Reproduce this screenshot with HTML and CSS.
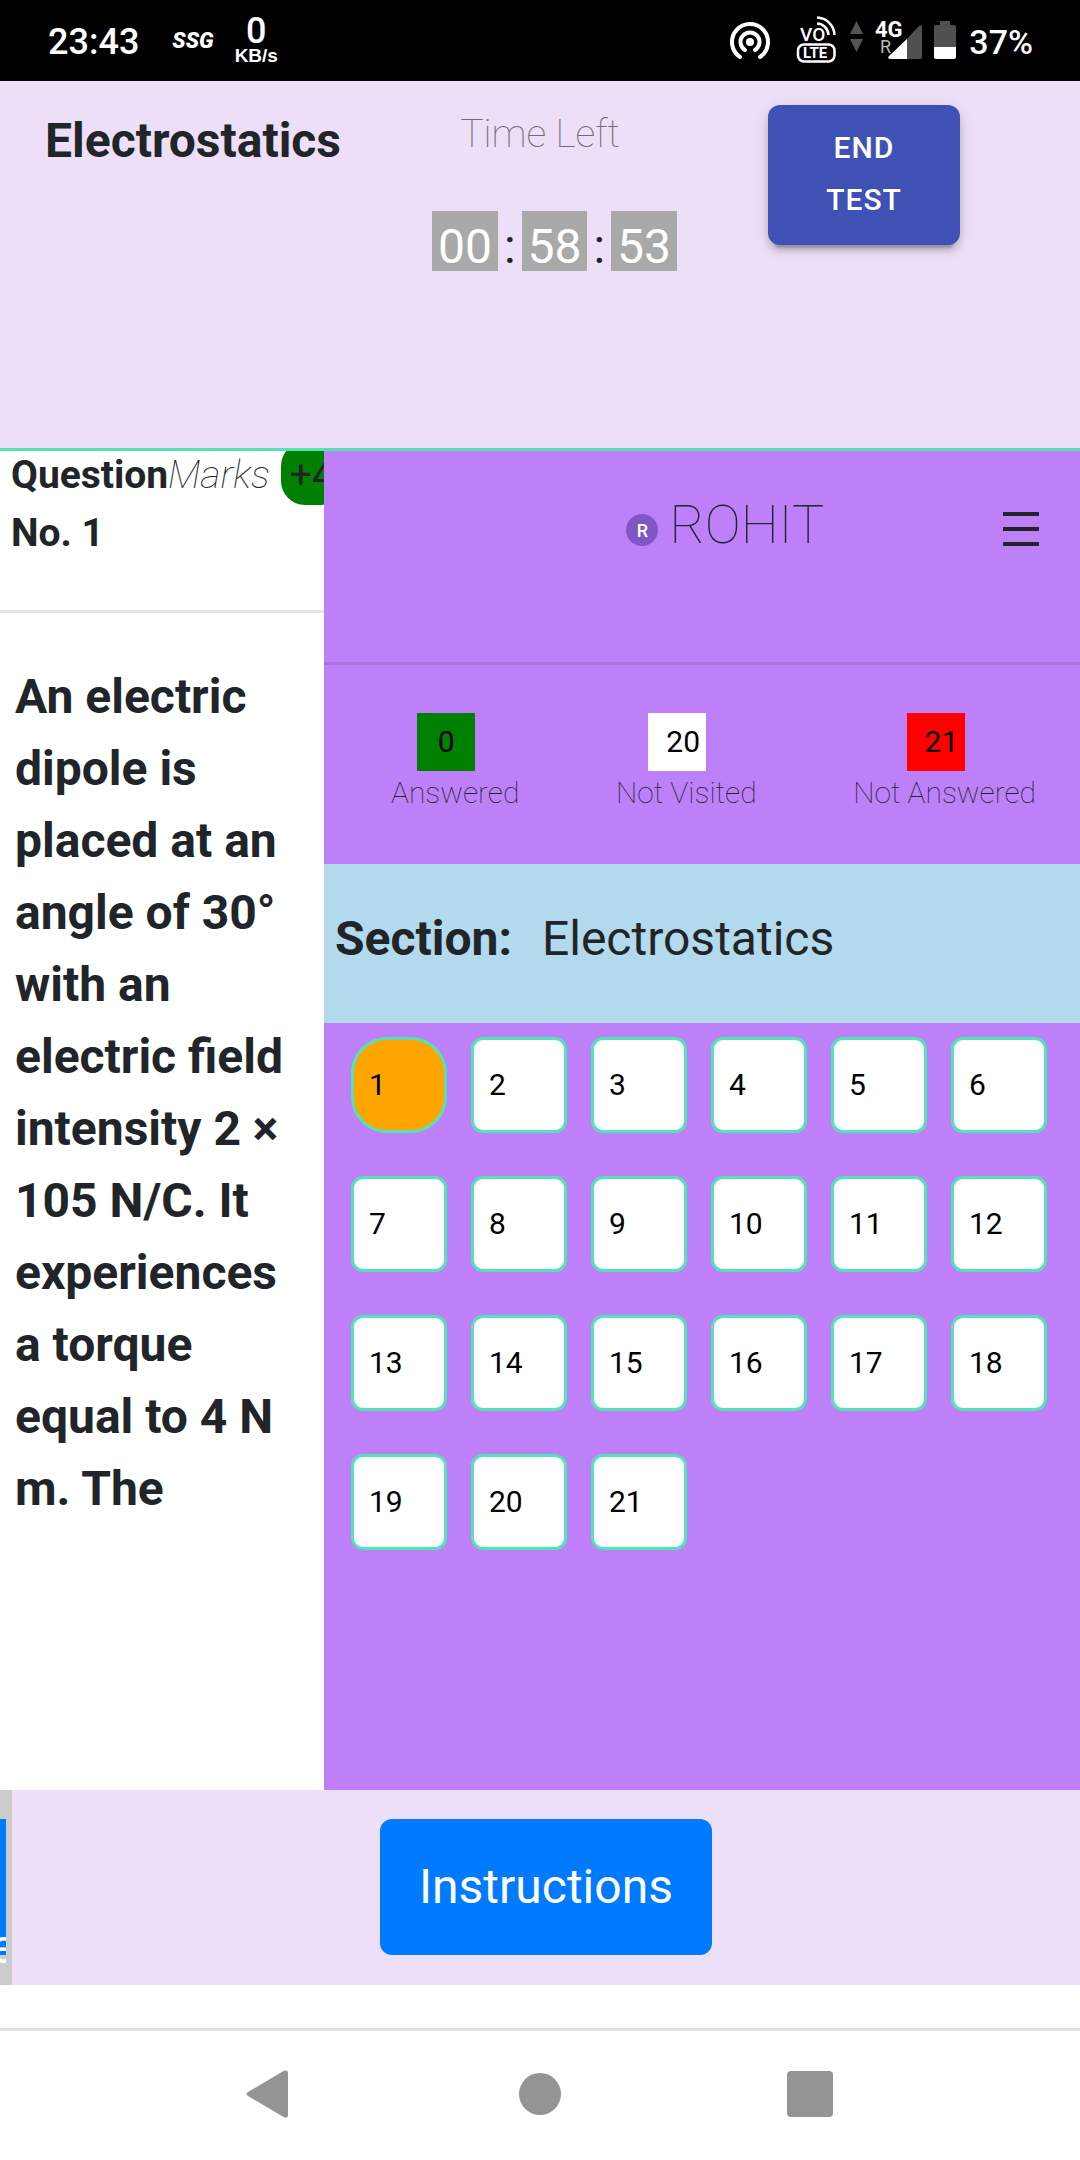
FILE: index.html
```html
<!DOCTYPE html>
<html lang="en">
<head>
<meta charset="utf-8">
<meta name="viewport" content="width=device-width, initial-scale=1">
<title>Electrostatics</title>
<link rel="stylesheet" href="styles.css">
</head>
<body>
<div class="status">
  <span class="clock">23:43</span>
  <span class="ssg">SSG</span>
  <span class="rate"><b class="rate-num">0</b><b class="rate-unit">KB/s</b></span>
  <svg class="status-icons" width="230" height="81" viewBox="728 0 230 81" aria-hidden="true">
    <g fill="none" stroke="#fff" stroke-width="4" stroke-linecap="round">
      <path d="M740 57a18 18 0 1 1 20 0"/>
      <path d="M745 50a9.500 9.500 0 1 1 10 0" />
    </g>
    <circle cx="750" cy="42" r="4" fill="#fff"/>
    <g fill="none" stroke="#fff" stroke-width="2.500">
      <rect x="798" y="44.500" width="36.500" height="17" rx="6"/>
      <path d="M817 17.500a18 18 0 0 1 17.500 17.500M817 23.500a12 12 0 0 1 11.500 11.500"/>
    </g>
    <text x="800" y="41" class="vo">VO</text>
    <text x="803" y="58" class="lte">LTE</text>
    <path d="M850 34h13l-6.500-13zM850 39h13l-6.500 13z" fill="#555"/>
    <path d="M888 59L919 26q3-2 3 1v30q0 2-2 2z" fill="#505050"/>
    <path d="M907 39v20h-17q-3-1-1-3z" fill="#fff"/>
    <text x="875" y="37" class="net">4G</text>
    <text x="880" y="53" class="roam">R</text>
    <path d="M940 21h10v4h4q2 0 2 2v21h-22v-21q0-2 2-2h4z" fill="#505050"/>
    <path d="M934 47h22v10q0 2-2 2h-18q-2 0-2-2z" fill="#fff"/>
  </svg>
  <span class="percent">37%</span>
</div>

<header class="top">
  <h1 class="title">Electrostatics</h1>
  <div class="time">
    <div class="time-label">Time Left</div>
    <div class="timer"><span class="digits">00</span><span>:</span><span class="digits">58</span><span>:</span><span class="digits">53</span></div>
  </div>
  <div class="end"><button class="end-btn" type="button">END TEST</button></div>
</header>

<main class="main">
  <section class="question">
    <div class="q-head">
      <b class="q-no">Question No. 1</b><i class="marks">Marks</i><span class="badge">+4</span>
    </div>
    <p class="q-text">An electric dipole is placed at an angle of 30° with an electric field intensity 2 × 105 N/C. It experiences a torque equal to 4 N m. The</p>
  </section>

  <aside class="panel">
    <div class="user">
      <span class="avatar">R</span>
      <span class="name">ROHIT</span>
      <button class="menu" type="button" aria-label="Menu">
        <svg width="36" height="34" viewBox="0 0 36 34"><path d="M0 2h36M0 17h36M0 32h36" stroke="#212529" stroke-width="4"/></svg>
      </button>
    </div>
    <div class="counts">
      <div class="count"><span class="box green">0</span><span class="count-label">Answered</span></div>
      <div class="count"><span class="box white">20</span><span class="count-label">Not Visited</span></div>
      <div class="count"><span class="box red">21</span><span class="count-label">Not Answered</span></div>
    </div>
    <div class="section"><b>Section:</b><span>Electrostatics</span></div>
    <div class="numbers">
      <button class="num current" type="button">1</button>
      <button class="num" type="button">2</button>
      <button class="num" type="button">3</button>
      <button class="num" type="button">4</button>
      <button class="num" type="button">5</button>
      <button class="num" type="button">6</button>
      <button class="num" type="button">7</button>
      <button class="num" type="button">8</button>
      <button class="num" type="button">9</button>
      <button class="num" type="button">10</button>
      <button class="num" type="button">11</button>
      <button class="num" type="button">12</button>
      <button class="num" type="button">13</button>
      <button class="num" type="button">14</button>
      <button class="num" type="button">15</button>
      <button class="num" type="button">16</button>
      <button class="num" type="button">17</button>
      <button class="num" type="button">18</button>
      <button class="num" type="button">19</button>
      <button class="num" type="button">20</button>
      <button class="num" type="button">21</button>
    </div>
  </aside>
</main>

<footer class="bottom">
  <div class="strip"><button class="cut" type="button">e</button></div>
  <div class="actions"><button class="instructions" type="button">Instructions</button></div>
</footer>

<nav class="nav">
  <button class="nav-btn" type="button" aria-label="Back"><svg width="48" height="48" viewBox="0 0 48 48"><path d="M2 22L38 .800q4-1.500 4 2.500v41.400q0 4-4 2.500L2 26q-3-2 0-4z" fill="#949494"/></svg></button>
  <button class="nav-btn" type="button" aria-label="Home"><svg width="48" height="48" viewBox="0 0 48 48"><circle cx="24" cy="24" r="21" fill="#949494"/></svg></button>
  <button class="nav-btn" type="button" aria-label="Recent apps"><svg width="48" height="48" viewBox="0 0 48 48"><rect x="1" y="1" width="46" height="46" rx="4" fill="#949494"/></svg></button>
</nav>
</body>
</html>
```
FILE: styles.css
```css
* { box-sizing: border-box; }

body {
  margin: 0;
  min-height: 100vh;
  display: flex;
  flex-direction: column;
  background: #fff;
  color: #212529;
  font-family: Roboto, "Liberation Sans", sans-serif;
}

button {
  border: 0;
  padding: 0;
  background: none;
  color: inherit;
  font: inherit;
}

svg { display: block; }

/* Status bar */
.status {
  display: flex;
  align-items: center;
  height: 81px;
  padding: 0 47px 0 48px;
  background: #000;
  color: #fff;
}
.clock { padding-top: 3px; font-size: 36px; font-weight: 500; }
.ssg { margin-left: 33px; font-size: 22px; font-weight: 900; font-style: italic; }
.rate {
  display: flex;
  flex-direction: column;
  align-items: center;
  margin-left: 21px;
  padding-bottom: 3px;
}
.rate-num { font-size: 36px; line-height: 34px; font-weight: 500; }
.rate-unit { font: bold 19px/16px "Liberation Sans", sans-serif; }
.status-icons { margin-left: auto; }
.percent { margin-left: 11px; padding-top: 2px; font-size: 34px; font-weight: 500; }
.status-icons text { fill: #fff; font-family: Roboto, sans-serif; }
.status-icons .vo { font-size: 19px; font-weight: 500; }
.status-icons .lte { font-size: 15px; font-weight: 700; }
.status-icons .net { font-size: 22px; font-weight: 700; }
.status-icons .roam { font-size: 18px; fill: #bbb; }

/* Test header */
.top {
  display: grid;
  grid-template-columns: 1fr 1fr 1fr;
  min-height: 370px;
  padding-top: 24px;
  background: #ecdff7;
  border-bottom: 3px solid #55e3b6;
}
.title { margin: 0; padding-left: 45px; font-size: 48px; line-height: 72px; }
.time {
  display: flex;
  flex-direction: column;
  align-items: center;
}
.time-label {
  color: #6c6c70;
  font-size: 39px;
  line-height: 58px;
  font-weight: 100;
}
.timer {
  display: flex;
  gap: 6px;
  margin-top: 48px;
  padding-left: 29px;
  font-size: 48px;
  line-height: 72px;
}
.digits {
  height: 60px;
  padding: 0 6px;
  background: #a9a9a9;
  color: #fff;
}
.end { padding-left: 48px; }
.end-btn {
  width: 192px;
  padding: 17px 48px 19px;
  border-radius: 12px;
  background: #3f51b5;
  color: #fff;
  font-size: 30px;
  line-height: 52px;
  font-weight: 500;
  letter-spacing: 1px;
  box-shadow: 0 9px 3px -6px rgba(0, 0, 0, .2), 0 6px 6px rgba(0, 0, 0, .14), 0 3px 15px rgba(0, 0, 0, .12);
}

/* Question pane and side panel */
.main {
  flex: 1;
  display: grid;
  grid-template-columns: 3fr 7fr;
}
.question { min-width: 0; overflow: hidden; }
.q-head {
  display: flex;
  align-items: flex-start;
  min-height: 167px;
  margin-top: -5px;
  padding-left: 11px;
  border-bottom: 3px solid #e5e5e5;
  font-size: 39px;
  line-height: 58px;
}
.q-no { flex: none; width: 157px; }
.marks { font-weight: 100; }
.badge {
  margin: -4px 0 0 11px;
  padding: 4px 9px 1px;
  border-radius: 24px;
  background: green;
}
.q-text {
  margin: 48px 15px;
  font-size: 48px;
  line-height: 72px;
  font-weight: 700;
}

.panel { background: #bd80f9; }
.user {
  display: flex;
  align-items: flex-start;
  min-height: 214px;
  padding: 42px 41px 0 40%;
  border-bottom: 3px solid #aa73e0;
}
.avatar {
  width: 32px;
  height: 32px;
  margin-top: 21px;
  border-radius: 50%;
  background: #7e57c2;
  color: #fff;
  font-size: 18px;
  line-height: 34px;
  font-weight: 500;
  text-align: center;
}
.name { margin-left: 11px; font-size: 54px; line-height: 64px; font-weight: 100; }
.menu { margin: 19px 0 0 auto; }

.counts {
  display: flex;
  justify-content: space-between;
  padding: 48px 44px 50px 67px;
}
.count {
  display: flex;
  flex-direction: column;
  align-items: center;
}
.box {
  width: 58px;
  margin-right: 18px;
  padding: 0 18px;
  color: #000;
  font-size: 30px;
  line-height: 58px;
  text-align: center;
}
.green { background: green; }
.white { background: #fff; }
.red { background: red; }
.count-label { font-size: 30px; line-height: 43px; font-weight: 100; }

.section {
  display: flex;
  gap: 30px;
  padding: 39px 11px 48px;
  background: #b3d9ec;
  font-size: 48px;
  line-height: 72px;
}

.numbers {
  display: flex;
  flex-wrap: wrap;
  gap: 43px 24px;
  padding: 14px 27px;
}
.num {
  width: 96px;
  height: 96px;
  padding: 0 15px 1px;
  border: 3px solid #55e3b6;
  border-radius: 12px;
  background: #fff;
  color: #000;
  font-size: 30px;
  text-align: left;
}
.current { border-radius: 36px; background: orange; }

/* Footer */
.bottom {
  display: flex;
  margin-bottom: 43px;
  background: #ecdff7;
}
.strip {
  width: 12px;
  padding: 29px 6px 30px 0;
  background: #ccc;
}
.cut {
  display: flex;
  align-items: flex-end;
  justify-content: center;
  width: 6px;
  height: 136px;
  background: #007bff;
  color: #fff;
  font-size: 48px;
  line-height: 16px;
  overflow-x: clip;
}
.actions {
  flex: 1;
  padding: 29px 0 30px 368px;
}
.instructions {
  padding: 32px 39px;
  border-radius: 12px;
  background: #007bff;
  color: #fff;
  font-size: 48px;
  line-height: 72px;
}

/* System navigation */
.nav {
  display: flex;
  justify-content: center;
  gap: 222px;
  padding: 39px 0 42px;
  border-top: 3px solid #e0e0e0;
}
```
